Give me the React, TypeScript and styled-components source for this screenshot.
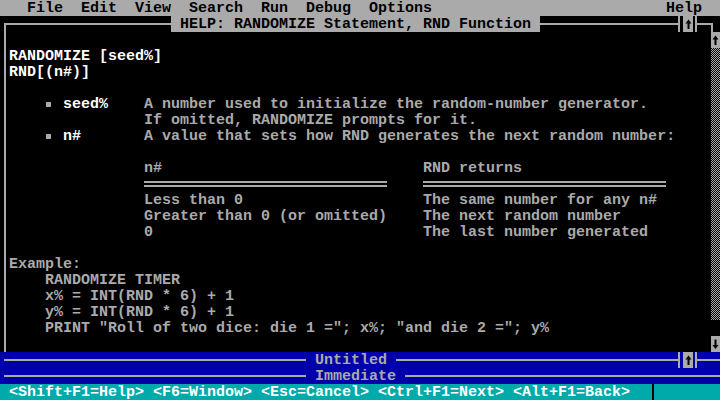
import React from "react";
import styled, { createGlobalStyle } from "styled-components";

const GRAY = "#aaaaaa";
const WHITE = "#ffffff";
const BLUE = "#0000aa";
const CYAN = "#00aaaa";
const CW = 9;

const Global = createGlobalStyle`
  html, body { margin: 0; padding: 0; background: #000; }
  body { width: 720px; height: 400px; overflow: hidden; }
`;

const Screen = styled.div`
  width: 720px;
  height: 400px;
  display: flex;
  flex-direction: column;
  background: #000;
  color: ${GRAY};
  font-family: "Liberation Mono", "DejaVu Sans Mono", monospace;
  font-size: 15px;
  line-height: 17px;
  font-weight: bold;
  white-space: pre;
  overflow: hidden;
`;

/* ---------- menu bar ---------- */
const MenuBar = styled.div`
  height: 16px;
  flex: none;
  display: flex;
  gap: 18px;
  background: ${GRAY};
  color: #000;
  padding: 0 18px 0 27px;
`;
const MenuItem = styled.span<{ $right?: boolean }>`
  margin-left: ${(p) => (p.$right ? "auto" : "0")};
`;

/* ---------- frame pieces ---------- */
const FrameRow = styled.div<{ $bg?: string }>`
  height: 16px;
  flex: none;
  display: flex;
  align-items: flex-end;
  background: ${(p) => p.$bg ?? "transparent"};
`;
const Corner = styled.div<{ $side: "left" | "right"; $w: number; $ml?: number }>`
  box-sizing: border-box;
  width: ${(p) => p.$w}px;
  height: 9px;
  margin-left: ${(p) => p.$ml ?? 0}px;
  border-top: 2px solid ${GRAY};
  ${(p) => (p.$side === "left" ? `border-left: 2px solid ${GRAY};` : `border-right: 2px solid ${GRAY};`)}
`;
const HLine = styled.div<{ $w?: number; $ml?: number }>`
  ${(p) => (p.$w ? `width: ${p.$w}px; flex: none;` : "flex: 1;")}
  margin-left: ${(p) => p.$ml ?? 0}px;
  align-self: center;
  height: 2px;
  margin-top: -1px;
  background: ${GRAY};
`;
const TitleBox = styled.div`
  align-self: stretch;
  padding: 0 ${CW}px;
  background: ${GRAY};
  color: #000;
`;
const PlainTitle = styled.div`
  align-self: stretch;
  padding: 0 ${CW}px;
  color: ${GRAY};
`;
const Edge = styled.div<{ $ml?: number }>`
  width: 2px;
  flex: none;
  align-self: stretch;
  margin-left: ${(p) => p.$ml ?? 0}px;
  background: ${GRAY};
`;
const ArrowBox = styled.div<{ $w?: number; $ml?: number }>`
  width: ${(p) => p.$w ?? 9}px;
  height: 16px;
  flex: none;
  margin-left: ${(p) => p.$ml ?? 0}px;
  background: ${GRAY};
  display: flex;
  align-items: center;
  justify-content: center;
`;

const Arrow = ({ dir }: { dir: "up" | "down" }) => (
  <svg width="9" height="16" viewBox="0 0 9 16">
    {dir === "up" ? (
      <path d="M4.5 3.5 L1.5 7.5 H3.5 V13 H5.5 V7.5 H7.5 Z" fill="#000" />
    ) : (
      <path d="M4.5 13 L1.5 9 H3.5 V3.5 H5.5 V9 H7.5 Z" fill="#000" />
    )}
  </svg>
);

const MaxButton = () => (
  <>
    <Edge />
    <ArrowBox $w={10} $ml={3}>
      <Arrow dir="up" />
    </ArrowBox>
    <Edge $ml={2} />
  </>
);

/* ---------- help window ---------- */
const HelpBody = styled.div`
  height: 320px;
  flex: none;
  display: flex;
`;
const Content = styled.div`
  flex: 1;
  margin-left: 4px;
  border-left: 2px solid ${GRAY};
  padding-left: 3px;
  display: flex;
  flex-direction: column;
`;
const Line = styled.div<{ $indent?: number }>`
  height: 16px;
  padding-left: ${(p) => (p.$indent ?? 0) * CW}px;
`;
const Bright = styled.span`
  color: ${WHITE};
`;
const Bullet = styled.span`
  display: inline-flex;
  width: ${CW}px;
  height: 16px;
  vertical-align: top;
  align-items: center;
  padding-left: 1px;
  box-sizing: border-box;
  &::before {
    content: "";
    width: 5px;
    height: 5px;
    background: ${GRAY};
  }
`;
const Table = styled.div`
  display: grid;
  grid-template-columns: 243px 243px;
  column-gap: 36px;
  margin-left: ${15 * CW}px;
  grid-auto-rows: 16px;
`;
const DoubleRule = styled.div`
  box-sizing: border-box;
  height: 6px;
  margin-top: 5px;
  border-top: 2px solid ${GRAY};
  border-bottom: 2px solid ${GRAY};
`;

const Scrollbar = styled.div`
  width: 9px;
  flex: none;
  display: flex;
  flex-direction: column;
`;
const Track = styled.div`
  flex: 1;
  background: repeating-conic-gradient(${GRAY} 0 25%, #000 0 50%) 0 0 / 2px 2px;
`;
const Thumb = styled.div`
  height: 16px;
  background: #000;
`;

/* ---------- status bar ---------- */
const StatusBar = styled.div`
  height: 16px;
  flex: none;
  display: flex;
  background: ${CYAN};
  color: ${WHITE};
  padding-left: ${CW}px;
`;
const StatusSep = styled.div`
  width: 2px;
  margin-left: 22px;
  background: #000;
`;

const menus = ["File", "Edit", "View", "Search", "Run", "Debug", "Options"];

export default function App() {
  return (
    <>
      <Global />
      <Screen>
        <MenuBar>
          {menus.map((m) => (
            <MenuItem key={m}>{m}</MenuItem>
          ))}
          <MenuItem $right>Help</MenuItem>
        </MenuBar>

        <FrameRow>
          <Corner $side="left" $w={167} $ml={4} />
          <TitleBox>HELP: RANDOMIZE Statement, RND Function</TitleBox>
          <HLine />
          <MaxButton />
          <Corner $side="right" $w={16} />
          <div style={{ width: 7 }} />
        </FrameRow>

        <HelpBody>
          <Content>
            <Line> </Line>
            <Line>
              <Bright>RANDOMIZE [seed%]</Bright>
            </Line>
            <Line>
              <Bright>RND[(n#)]</Bright>
            </Line>
            <Line> </Line>
            <Line $indent={4}>
              <Bullet /> <Bright>seed%</Bright>
              {"    A number used to initialize the random-number generator."}
            </Line>
            <Line $indent={15}>If omitted, RANDOMIZE prompts for it.</Line>
            <Line $indent={4}>
              <Bullet /> <Bright>n#</Bright>
              {"       A value that sets how RND generates the next random number:"}
            </Line>
            <Line> </Line>
            <Table>
              <span>n#</span>
              <span>RND returns</span>
              <DoubleRule />
              <DoubleRule />
              <span>Less than 0</span>
              <span>The same number for any n#</span>
              <span>Greater than 0 (or omitted)</span>
              <span>The next random number</span>
              <span>0</span>
              <span>The last number generated</span>
            </Table>
            <Line> </Line>
            <Line>Example:</Line>
            <Line $indent={4}>RANDOMIZE TIMER</Line>
            <Line $indent={4}>x% = INT(RND * 6) + 1</Line>
            <Line $indent={4}>y% = INT(RND * 6) + 1</Line>
            <Line $indent={4}>PRINT "Roll of two dice: die 1 ="; x%; "and die 2 ="; y%</Line>
          </Content>
          <Scrollbar>
            <ArrowBox>
              <Arrow dir="up" />
            </ArrowBox>
            <Track />
            <Thumb />
            <ArrowBox>
              <Arrow dir="down" />
            </ArrowBox>
          </Scrollbar>
        </HelpBody>

        <FrameRow $bg={BLUE}>
          <HLine $w={302} $ml={4} />
          <PlainTitle>Untitled</PlainTitle>
          <HLine />
          <MaxButton />
          <HLine $w={23} />
        </FrameRow>
        <FrameRow $bg={BLUE}>
          <HLine $w={302} $ml={4} />
          <PlainTitle>Immediate</PlainTitle>
          <HLine />
        </FrameRow>

        <StatusBar>
          {"<Shift+F1=Help> <F6=Window> <Esc=Cancel> <Ctrl+F1=Next> <Alt+F1=Back>"}
          <StatusSep />
        </StatusBar>
      </Screen>
    </>
  );
}
